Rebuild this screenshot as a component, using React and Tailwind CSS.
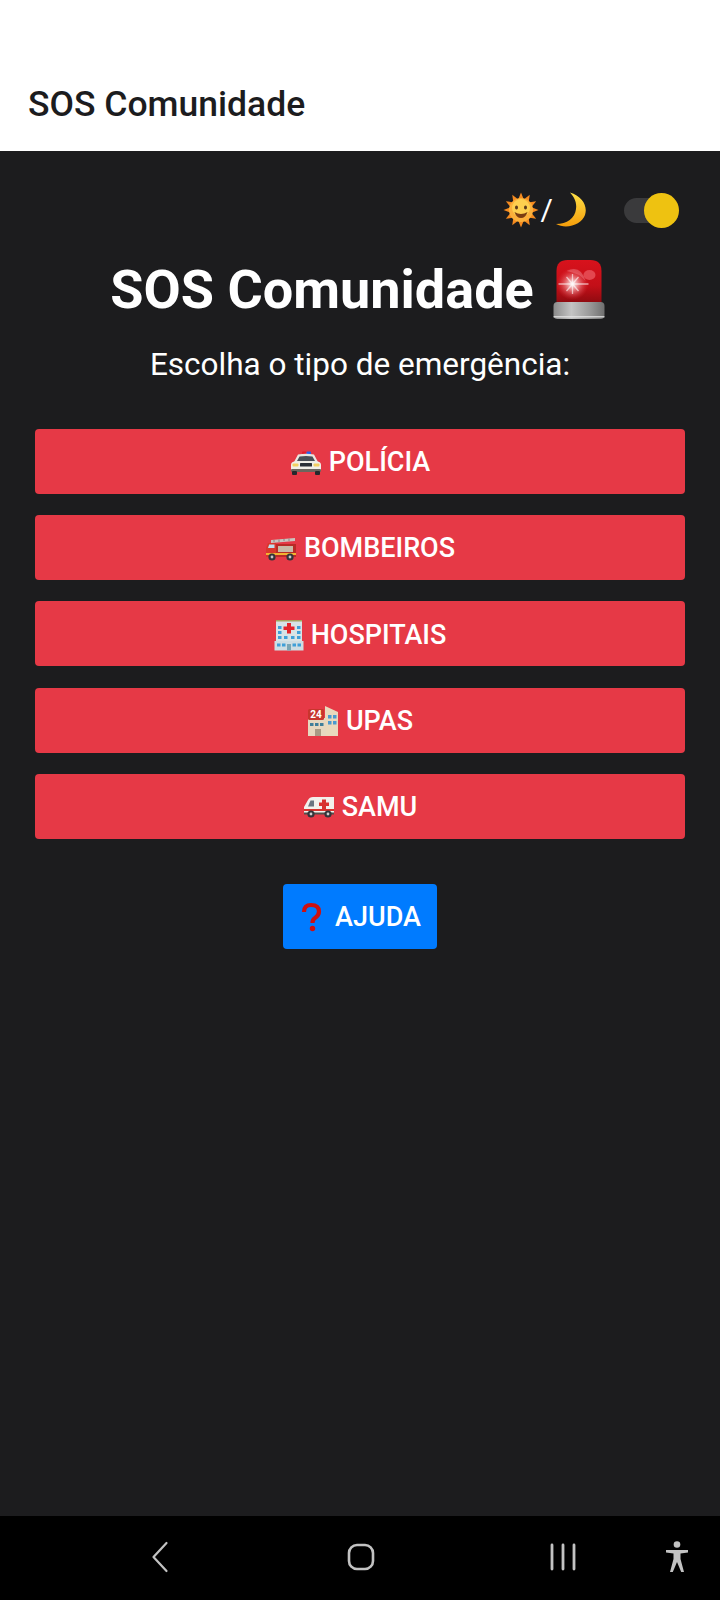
const font = { fontFamily: 'Roboto, "Liberation Sans", sans-serif' }

function Sun() {
  const rays = [0, 30, 60, 90, 120, 150, 180, 210, 240, 270, 300, 330]
  return (
    <svg viewBox="0 0 36 36" className="h-[36px] w-[36px] shrink-0">
      {rays.map((r) => (
        <path key={r} d="M18 0.5 L21 8 L15 8 Z" fill="#f58a1f" transform={`rotate(${r} 18 18)`} />
      ))}
      <circle cx="18" cy="18" r="12" fill="#fbb03b" />
      <circle cx="18" cy="16" r="9" fill="#fdd04f" />
      <ellipse cx="13.5" cy="15.5" rx="1.5" ry="2" fill="#5b3a1a" />
      <ellipse cx="22.5" cy="15.5" rx="1.5" ry="2" fill="#5b3a1a" />
      <path d="M11.5 20 Q18 24 24.5 20 Q22.5 26 18 26 Q13.5 26 11.5 20 Z" fill="#7a3d12" />
    </svg>
  )
}

function Moon() {
  return (
    <svg viewBox="0 0 32 36" className="h-[36px] w-[32px] shrink-0">
      <defs>
        <linearGradient id="moon" x1="0" y1="0" x2="0" y2="1">
          <stop offset="0" stopColor="#fde047" />
          <stop offset="1" stopColor="#f59e0b" />
        </linearGradient>
      </defs>
      <path d="M15 0.5 C27 4 33 14 30 23 C27 32 12 38 1 32 C12 32 20 26 21 17 C22 10 19 5 15 0.5 Z" fill="url(#moon)" />
    </svg>
  )
}

function Siren() {
  return (
    <svg viewBox="0 0 53 60" className="h-[60px] w-[54px] shrink-0">
      <defs>
        <linearGradient id="dome" x1="0" y1="0" x2="0" y2="1">
          <stop offset="0" stopColor="#d8121c" />
          <stop offset="0.6" stopColor="#c30f18" />
          <stop offset="1" stopColor="#8d0b10" />
        </linearGradient>
        <linearGradient id="base" x1="0" y1="0" x2="1" y2="0">
          <stop offset="0" stopColor="#8a8a8a" />
          <stop offset="0.35" stopColor="#c4c4c4" />
          <stop offset="0.7" stopColor="#9b9b9b" />
          <stop offset="1" stopColor="#6f6f6f" />
        </linearGradient>
        <radialGradient id="flash">
          <stop offset="0" stopColor="#ffffff" />
          <stop offset="0.3" stopColor="#f7b9bb" stopOpacity="0.8" />
          <stop offset="1" stopColor="#e8343c" stopOpacity="0" />
        </radialGradient>
      </defs>
      <path d="M4 44 L4 12 Q4 1 15 1 L38 1 Q49 1 49 12 L49 44 Z" fill="url(#dome)" />
      <ellipse cx="37" cy="16" rx="6" ry="5" fill="#e8555c" opacity="0.8" />
      <path d="M14 12 Q28 5 33 22 Q27 14 14 12 Z" fill="#e8727a" opacity="0.6" />
      <circle cx="20" cy="25" r="16" fill="url(#flash)" />
      <path d="M6 25 L36 25 M20 15 L20 35 M14 18 L26 32 M26 18 L14 32" stroke="#fff" strokeWidth="1.3" opacity="0.6" />
      <path d="M1 47 Q1 43 5 43 L48 43 Q52 43 52 47 L52 56 Q52 60 48 60 L5 60 Q1 60 1 56 Z" fill="url(#base)" />
      <rect x="1" y="57" width="51" height="1.5" fill="#e4e4e4" opacity="0.8" />
    </svg>
  )
}

function PoliceCar() {
  return (
    <svg viewBox="0 0 32 24" className="h-[24px] w-[32px] shrink-0">
      <rect x="12" y="0.5" width="4.5" height="3" rx="1" fill="#e11d2e" />
      <rect x="16.5" y="0.5" width="4.5" height="3" rx="1" fill="#2563eb" />
      <path d="M8 3.5 Q16 2 24 3.5 L28 11 L4 11 Z" fill="#e9e7e1" />
      <path d="M9.5 5.5 Q16 4.5 22.5 5.5 L25 10 L7 10 Z" fill="#4a4f57" />
      <path d="M1 14 Q1 10.5 5 10.5 L27 10.5 Q31 10.5 31 14 L31 20 L1 20 Z" fill="#f1efe8" />
      <rect x="10" y="12" width="12" height="3.5" rx="0.5" fill="#2a2f36" />
      <rect x="2.5" y="12.5" width="6" height="3" rx="1" fill="#f2cf62" />
      <rect x="23.5" y="12.5" width="6" height="3" rx="1" fill="#f2cf62" />
      <rect x="1" y="18" width="30" height="3" rx="1" fill="#6b665e" />
      <rect x="2" y="20" width="5" height="4" rx="1" fill="#26282c" />
      <rect x="25" y="20" width="5" height="4" rx="1" fill="#26282c" />
    </svg>
  )
}

function FireTruck() {
  return (
    <svg viewBox="0 0 32 24" className="h-[24px] w-[32px] shrink-0">
      <path d="M6 3 L30 1 L30 4 L6 6 Z" fill="#c9c5c0" />
      <path d="M9 5 L9 3 M14 5 L14 2.5 M19 4 L19 2 M24 4 L24 1.5" stroke="#8a8580" strokeWidth="1" />
      <rect x="11" y="7" width="20" height="13" fill="#b92b26" />
      <rect x="13" y="9" width="15" height="6" fill="#c9b9a6" />
      <path d="M1 11 L3 6 L11 6 L11 20 L1 20 Z" fill="#d9372c" />
      <path d="M3 11 L4.2 7.5 L9.5 7.5 L9.5 11 Z" fill="#bfe0ee" />
      <rect x="1" y="16" width="30" height="2" fill="#f2b230" />
      <circle cx="7" cy="20" r="3.6" fill="#34343a" />
      <circle cx="7" cy="20" r="1.4" fill="#c7c7c7" />
      <circle cx="25" cy="20" r="3.6" fill="#34343a" />
      <circle cx="25" cy="20" r="1.4" fill="#c7c7c7" />
    </svg>
  )
}

function Hospital() {
  const cells = [
    [4, 7], [4, 12], [23, 7], [23, 12],
    [4, 17], [10, 17], [17, 17], [23, 17],
  ]
  return (
    <svg viewBox="0 0 30 32" className="h-[32px] w-[30px] shrink-0">
      <rect x="2" y="1" width="26" height="21" fill="#d8e3e6" />
      <rect x="2" y="1" width="26" height="1.5" fill="#a8a35f" />
      {cells.map(([x, y]) => (
        <rect key={`${x}-${y}`} x={x} y={y} width="3.5" height="3" fill="#3f9fd8" />
      ))}
      <path d="M13 4 H17 V7.5 H20.5 V11 H17 V14.5 H13 V11 H9.5 V7.5 H13 Z" fill="#e3242b" />
      <rect x="0.5" y="22" width="29" height="9.5" fill="#cfdde2" />
      <rect x="3" y="24.5" width="3.5" height="3" fill="#3f9fd8" />
      <rect x="8" y="24.5" width="3.5" height="3" fill="#3f9fd8" />
      <rect x="18.5" y="24.5" width="3.5" height="3" fill="#3f9fd8" />
      <rect x="23.5" y="24.5" width="3.5" height="3" fill="#3f9fd8" />
      <rect x="13" y="25" width="4" height="6.5" fill="#7aa6b5" />
    </svg>
  )
}

function Upa() {
  return (
    <svg viewBox="0 0 32 32" className="h-[32px] w-[32px] shrink-0">
      <path d="M18 1 L31 7 L31 31 L18 31 Z" fill="#e9d9bd" />
      <rect x="1" y="13" width="18" height="18" fill="#e6d8c0" />
      <rect x="1" y="4" width="16" height="11" rx="1.5" fill="#c8352d" />
      <text x="9" y="13" textAnchor="middle" fontSize="10" fontWeight="700" fill="#fff" fontFamily="Roboto, sans-serif">24</text>
      <rect x="21" y="10" width="3.5" height="3.5" fill="#4a9ad0" />
      <rect x="26" y="10" width="3.5" height="3.5" fill="#4a9ad0" />
      <rect x="21" y="16" width="3.5" height="3.5" fill="#4a9ad0" />
      <rect x="26" y="16" width="3.5" height="3.5" fill="#4a9ad0" />
      <rect x="3" y="18" width="3.5" height="3" fill="#3f7f9a" />
      <rect x="8" y="18" width="3.5" height="3" fill="#3f7f9a" />
      <rect x="13" y="18" width="3.5" height="3" fill="#3f7f9a" />
      <rect x="8" y="24" width="6" height="7" fill="#a89a85" />
    </svg>
  )
}

function Ambulance() {
  return (
    <svg viewBox="0 0 32 22" className="h-[22px] w-[32px] shrink-0">
      <path d="M10 1 L31 1 L31 18 L1 18 L1 11 L5 4 Q6.5 1 10 1 Z" fill="#f2f0ec" />
      <path d="M5 10.5 L7.5 4.5 L11 4.5 L11 10.5 Z" fill="#6a7480" />
      <rect x="1" y="13" width="30" height="2" fill="#d8332e" />
      <path d="M19 3.5 H23 V6.5 H26 V10 H23 V13 H19 V10 H16 V6.5 H19 Z" fill="#d8332e" />
      <rect x="1" y="16.5" width="30" height="2" fill="#55504b" />
      <circle cx="8" cy="18" r="3.6" fill="#34343a" />
      <circle cx="8" cy="18" r="1.4" fill="#cfcfcf" />
      <circle cx="25" cy="18" r="3.6" fill="#34343a" />
      <circle cx="25" cy="18" r="1.4" fill="#cfcfcf" />
    </svg>
  )
}

function Question() {
  return (
    <svg viewBox="0 0 24 30" className="h-[30px] w-[24px] shrink-0">
      <path d="M5 10 Q5 3 12 3 Q20 3 20 9.5 Q20 13.5 16 16 Q13.5 17.5 13.5 21" fill="none" stroke="#cc1111" strokeWidth="4.2" />
      <circle cx="13.5" cy="26.5" r="2.7" fill="#cc1111" />
    </svg>
  )
}

const services = [
  { label: 'POLÍCIA', icon: <PoliceCar /> },
  { label: 'BOMBEIROS', icon: <FireTruck /> },
  { label: 'HOSPITAIS', icon: <Hospital /> },
  { label: 'UPAS', icon: <Upa /> },
  { label: 'SAMU', icon: <Ambulance /> },
]

function NavBar() {
  return (
    <nav className="flex h-[84px] items-center bg-black pb-[2px] text-[#c2c2c2]">
      <svg viewBox="0 0 18 32" className="ml-[151px] h-[32px] w-[18px]" fill="none" stroke="currentColor" strokeWidth="2.2" strokeLinecap="round" strokeLinejoin="round">
        <path d="M15.5 2 L2.5 16 L15.5 30" />
      </svg>
      <svg viewBox="0 0 28 28" className="ml-[178px] h-[28px] w-[28px]" fill="none" stroke="currentColor" strokeWidth="2.6">
        <rect x="2" y="2" width="24" height="24" rx="8" />
      </svg>
      <svg viewBox="0 0 26 28" className="ml-[175px] h-[28px] w-[26px]" fill="none" stroke="currentColor" strokeWidth="2.8" strokeLinecap="round">
        <path d="M2 2 V26 M13 2 V26 M24 2 V26" />
      </svg>
      <svg viewBox="0 0 24 32" className="ml-[88px] h-[32px] w-[26px]" fill="currentColor">
        <circle cx="12" cy="3.5" r="3.3" />
        <path d="M1 9 H23 V11.4 L15.5 12.6 L15.5 18 L19 31 L16.2 31 L12 21 L7.8 31 L5 31 L8.5 18 L8.5 12.6 L1 11.4 Z" />
      </svg>
    </nav>
  )
}

export default function App() {
  return (
    <div className="flex h-[1600px] w-[720px] flex-col bg-[#1c1c1e] text-white" style={font}>
      <header className="flex h-[151px] shrink-0 items-end bg-white pb-[24px] pl-[28px]">
        <h2 className="text-[35.5px] leading-[46px] font-medium text-[#1c1c1e]">SOS Comunidade</h2>
      </header>

      <main className="flex flex-1 flex-col items-center px-[35px]">
        <div className="mt-[41px] flex h-[36px] w-full items-center justify-end">
          <Sun />
          <span className="mx-[2px] text-[30px] leading-[36px]">/</span>
          <Moon />
          <span className="relative mr-[11px] ml-[37px] h-[25px] w-[50px] rounded-full bg-[#3a3a3c]">
            <span className="absolute top-[-5px] right-[-5px] h-[35px] w-[35px] rounded-full bg-[#eec211]" />
          </span>
        </div>

        <h1 className="mt-[31px] mr-[4px] flex h-[60px] items-center gap-[18px] text-[54px] font-bold">
          SOS Comunidade
          <Siren />
        </h1>

        <p className="mt-[24px] text-[31.5px] leading-[44px]">Escolha o tipo de emergência:</p>

        <div className="mt-[42px] flex w-full flex-col gap-[21.2px]">
          {services.map((s) => (
            <button key={s.label} className="flex h-[65px] items-center justify-center gap-[7px] rounded-[4px] bg-[#e63946] pt-[2px] text-[27px] font-medium">
              {s.icon}
              {s.label}
            </button>
          ))}
        </div>

        <button className="mt-[45px] flex h-[65px] w-[154px] items-center justify-center gap-[12px] rounded-[4px] bg-[#007bff] pt-[2px] text-[27px] font-medium">
          <Question />
          AJUDA
        </button>
      </main>

      <NavBar />
    </div>
  )
}
